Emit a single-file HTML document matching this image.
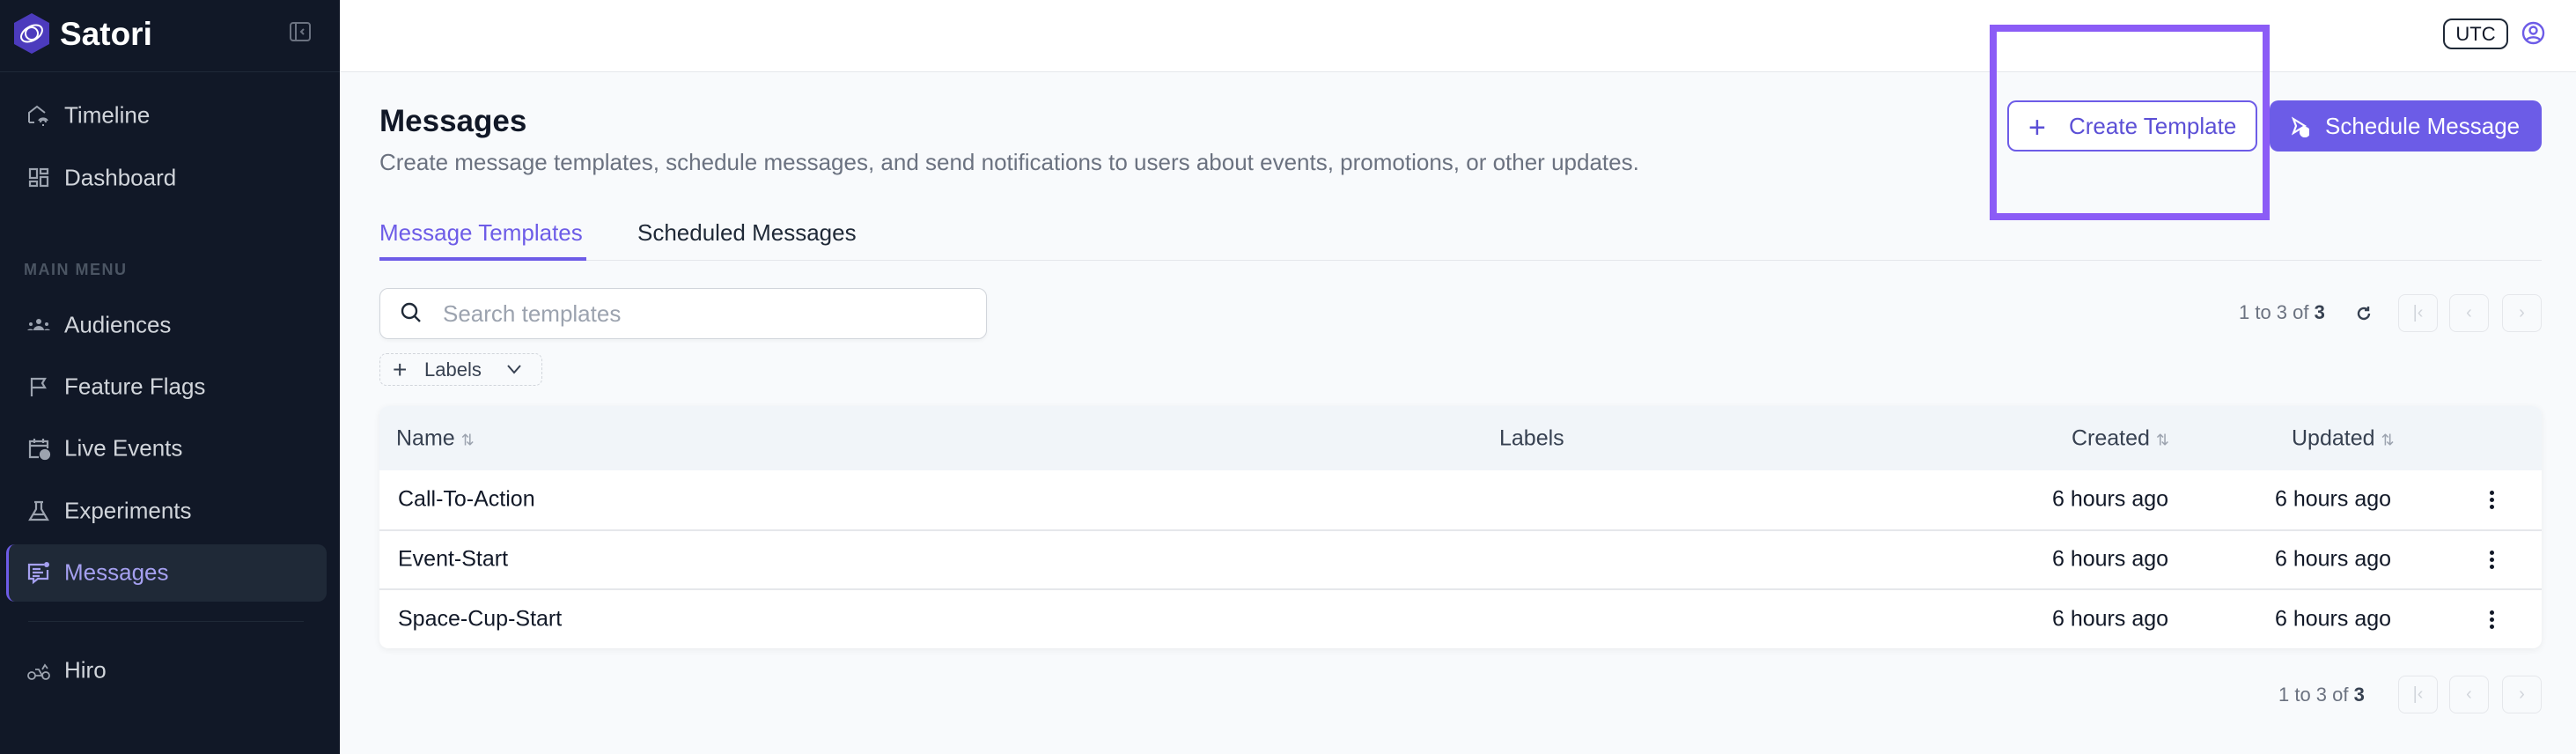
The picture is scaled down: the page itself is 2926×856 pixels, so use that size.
<!DOCTYPE html>
<html><head><meta charset="utf-8"><style>
*{box-sizing:border-box;margin:0;padding:0}
body{width:2926px;height:856px;overflow:hidden;background:#f8fafc;font-family:"Liberation Sans",sans-serif;position:relative}
.a{position:absolute;white-space:nowrap}
#sb{position:absolute;left:0;top:0;width:386px;height:856px;background:#111827}
.nav{position:absolute;left:73px;font-size:26px;color:#d1d5db;transform:translateY(-50%)}
.ic{position:absolute;left:30px;width:28px;height:28px;transform:translateY(-50%)}
.pb{position:absolute;width:45px;height:43px;border:1.5px solid #e5e7eb;border-radius:8px;color:#d1d5db;font-size:20px;text-align:center;line-height:40px}
.cell{position:absolute;font-size:25px;color:#111827;transform:translateY(-50%)}
.hd{position:absolute;font-size:25px;color:#374151;transform:translateY(-50%)}
.dots{position:absolute;left:2828px;width:6px}
.dots i{display:block;width:5px;height:5px;border-radius:50%;background:#111827;margin-bottom:3px}
</style></head><body>
<div id="sb">
 <svg class="a" style="left:14px;top:14px" width="44" height="48" viewBox="0 0 44 48"><polygon points="22,1 42,12 42,36 22,47 2,36 2,12" fill="#4c3bbd"/><ellipse cx="22" cy="24" rx="13" ry="8" fill="none" stroke="#fff" stroke-width="2" transform="rotate(-30 22 24)"/><circle cx="22" cy="24" r="7" fill="none" stroke="#fff" stroke-width="2"/></svg>
 <div class="a" style="left:68px;top:18px;font-size:37px;font-weight:bold;color:#fff">Satori</div>
 <svg class="a" style="left:329px;top:25px" width="24" height="22" viewBox="0 0 24 22"><rect x="1" y="1" width="22" height="20" rx="3" fill="none" stroke="#6b7280" stroke-width="2"/><line x1="7" y1="1" x2="7" y2="21" stroke="#6b7280" stroke-width="2"/><path d="M16 8l-3 3 3 3" fill="none" stroke="#6b7280" stroke-width="2"/></svg>
 <div class="a" style="left:0;top:81px;width:386px;height:1px;background:#1f2937"></div>

 <svg class="ic" style="top:131px" viewBox="0 0 28 28" fill="none" stroke="#9ca3af" stroke-width="2"><path d="M3 22V11l9-7 9 7"/><path d="M3 22h6"/><path d="M14 20a6 6 0 0 1 10 0M16 22a3 3 0 0 1 6 0M19 24v2"/></svg>
 <div class="nav" style="top:131px">Timeline</div>
 <svg class="ic" style="top:202px" viewBox="0 0 28 28" fill="none" stroke="#9ca3af" stroke-width="2.2"><rect x="4" y="4" width="8" height="10"/><rect x="16" y="4" width="8" height="5"/><rect x="4" y="18" width="8" height="5"/><rect x="16" y="13" width="8" height="10"/></svg>
 <div class="nav" style="top:202px">Dashboard</div>
 <div class="a" style="left:27px;top:296px;font-size:18px;color:#4b5563;font-weight:bold;letter-spacing:1.5px">MAIN MENU</div>
 <svg class="ic" style="top:369px" viewBox="0 0 28 28" fill="#9ca3af"><circle cx="14" cy="10" r="3"/><path d="M8 20a6 5 0 0 1 12 0z"/><circle cx="5" cy="13" r="2"/><circle cx="23" cy="13" r="2"/><path d="M1 20a4 3 0 0 1 7 0zM20 20a4 3 0 0 1 7 0z"/></svg>
 <div class="nav" style="top:369px">Audiences</div>
 <svg class="ic" style="top:439px" viewBox="0 0 28 28" fill="none" stroke="#9ca3af" stroke-width="2.2"><path d="M6 25V5h15l-3 5 3 5H6"/></svg>
 <div class="nav" style="top:439px">Feature Flags</div>
 <svg class="ic" style="top:509px" viewBox="0 0 28 28" fill="none" stroke="#9ca3af" stroke-width="2.2"><path d="M14 24H4V6h20v8M4 11h20M9 3v5M19 3v5"/><circle cx="21" cy="21" r="5" fill="#9ca3af"/></svg>
 <div class="nav" style="top:509px">Live Events</div>
 <svg class="ic" style="top:580px" viewBox="0 0 28 28" fill="none" stroke="#9ca3af" stroke-width="2.2"><path d="M9 4h10M11 4v8l-7 12h20l-7-12V4"/><path d="M7 18h14" /></svg>
 <div class="nav" style="top:580px">Experiments</div>
 <div class="a" style="left:7px;top:618px;width:364px;height:65px;background:#1f2937;border-radius:10px;border-left:3px solid #6d5ce7"></div>
 <svg class="ic" style="top:650px" viewBox="0 0 28 28" fill="none" stroke="#a5a0f0" stroke-width="2.2"><path d="M20 5H3v16h5v4l5-4h11V11"/><path d="M7 10h9M7 14h12M7 18h8"/><circle cx="23" cy="5" r="3" fill="#a5a0f0" stroke="none"/></svg>
 <div class="nav" style="top:650px;color:#a5a0f0">Messages</div>
 <div class="a" style="left:32px;top:705px;width:313px;height:1px;background:#1f2937"></div>
 <svg class="ic" style="top:761px" viewBox="0 0 28 28" fill="none" stroke="#9ca3af" stroke-width="1.8"><circle cx="6" cy="20" r="4"/><circle cx="22" cy="20" r="4"/><path d="M10 20h8l-4-7h-4M18 13l3-5 3 4"/></svg>
 <div class="nav" style="top:761px">Hiro</div>
</div>

<div class="a" style="left:386px;top:0;width:2540px;height:82px;background:#fff;border-bottom:1px solid #e5e7eb"></div>
<div class="a" style="left:2775px;top:21px;width:74px;height:35px;border:2px solid #1f2937;border-radius:10px;font-size:22px;text-align:center;line-height:31px;color:#111827">UTC</div>
<svg class="a" style="left:2864px;top:24px" width="27" height="27" viewBox="0 0 27 27" fill="none" stroke="#6d5ce7" stroke-width="2.4"><circle cx="13.5" cy="13.5" r="11.5"/><circle cx="13.5" cy="10.5" r="4"/><path d="M6 21a9 6 0 0 1 15 0"/></svg>

<div class="a" style="left:431px;top:118px;font-size:35px;font-weight:bold;color:#111827">Messages</div>
<div class="a" style="left:431px;top:169px;font-size:26px;color:#6b7280">Create message templates, schedule messages, and send notifications to users about events, promotions, or other updates.</div>

<div class="a" style="left:2260px;top:28px;width:318px;height:222px;border:8px solid #8b5cf6"></div>
<div class="a" style="left:2280px;top:114px;width:284px;height:58px;border:2px solid #6d5ce7;border-radius:10px;background:#fff;font-size:26px;color:#5b4fd6;line-height:54px;padding-left:68px">Create Template</div>
<div class="a" style="left:2304px;top:126px;font-size:34px;color:#5b4fd6;font-weight:300">+</div>
<div class="a" style="left:2578px;top:114px;width:309px;height:58px;border-radius:10px;background:#6c5ce7;font-size:26px;color:#fff;line-height:58px;padding-left:63px">Schedule Message</div>
<svg class="a" style="left:2603px;top:132px" width="20" height="24" viewBox="0 0 20 24" fill="none" stroke="#fff" stroke-width="2.2"><path d="M2 3l13 8-13 8 3-8z"/><circle cx="15" cy="18" r="5" fill="#fff"/></svg>

<div class="a" style="left:431px;top:249px;font-size:26px;color:#6d5ce7">Message Templates</div>
<div class="a" style="left:724px;top:249px;font-size:26px;color:#1f2937">Scheduled Messages</div>
<div class="a" style="left:431px;top:295px;width:2456px;height:1px;background:#e5e7eb"></div>
<div class="a" style="left:431px;top:292px;width:235px;height:4px;background:#6d5ce7"></div>

<div class="a" style="left:431px;top:327px;width:690px;height:58px;background:#fff;border:1.5px solid #d1d5db;border-radius:10px;box-shadow:0 2px 4px rgba(0,0,0,.04)"></div>
<svg class="a" style="left:454px;top:341px" width="26" height="28" viewBox="0 0 26 28" fill="none" stroke="#1f2937" stroke-width="2.4"><circle cx="11" cy="12" r="8"/><path d="M17 18l6 6"/></svg>
<div class="a" style="left:503px;top:341px;font-size:26px;color:#9ca3af">Search templates</div>
<div class="a" style="left:431px;top:401px;width:185px;height:37px;border:1.5px dashed #d1d5db;border-radius:8px"></div>
<div class="a" style="left:446px;top:401px;font-size:28px;color:#374151;line-height:37px">+</div>
<div class="a" style="left:482px;top:401px;font-size:22px;color:#374151;line-height:37px">Labels</div>
<svg class="a" style="left:575px;top:413px" width="18" height="12" viewBox="0 0 18 12" fill="none" stroke="#374151" stroke-width="2"><path d="M2 2l7 8 7-8"/></svg>

<div class="a" style="left:2543px;top:342px;font-size:22px;color:#6b7280">1 to 3 of <b style="color:#374151">3</b></div>
<svg class="a" style="left:2675px;top:346px" width="20" height="20" viewBox="0 0 20 20" fill="none" stroke="#374151" stroke-width="2.4"><path d="M16 10a6 6 0 1 1-2-4.5M15 2v4h-4"/></svg>
<div class="pb" style="left:2724px;top:334px">|‹</div><div class="pb" style="left:2782px;top:334px">‹</div><div class="pb" style="left:2842px;top:334px">›</div>

<div class="a" style="left:431px;top:461px;width:2456px;height:275px;background:#fff;border-radius:10px;box-shadow:0 2px 8px rgba(0,0,0,.06);overflow:hidden">
 <div style="height:73px;background:#f1f5f9"></div>
 <div style="position:absolute;top:140px;left:0;right:0;height:1.5px;background:#e5e7eb"></div>
 <div style="position:absolute;top:207px;left:0;right:0;height:1.5px;background:#e5e7eb"></div>
</div>
<div class="hd" style="left:450px;top:498px">Name <span style="color:#9ca3af;font-size:18px">⇅</span></div>
<div class="hd" style="left:1703px;top:498px">Labels</div>
<div class="hd" style="left:2353px;top:498px">Created <span style="color:#9ca3af;font-size:18px">⇅</span></div>
<div class="hd" style="left:2603px;top:498px">Updated <span style="color:#9ca3af;font-size:18px">⇅</span></div>
<div class="cell" style="left:452px;top:567px">Call-To-Action</div>
<div class="cell" style="left:452px;top:635px">Event-Start</div>
<div class="cell" style="left:452px;top:703px">Space-Cup-Start</div>
<div class="cell" style="left:2331px;top:567px">6 hours ago</div><div class="cell" style="left:2584px;top:567px">6 hours ago</div>
<div class="cell" style="left:2331px;top:635px">6 hours ago</div><div class="cell" style="left:2584px;top:635px">6 hours ago</div>
<div class="cell" style="left:2331px;top:703px">6 hours ago</div><div class="cell" style="left:2584px;top:703px">6 hours ago</div>
<div class="dots" style="top:557px"><i></i><i></i><i></i></div>
<div class="dots" style="top:625px"><i></i><i></i><i></i></div>
<div class="dots" style="top:693px"><i></i><i></i><i></i></div>

<div class="a" style="left:2588px;top:776px;font-size:22px;color:#6b7280">1 to 3 of <b style="color:#374151">3</b></div>
<div class="pb" style="left:2724px;top:767px">|‹</div><div class="pb" style="left:2782px;top:767px">‹</div><div class="pb" style="left:2842px;top:767px">›</div>
</body></html>
